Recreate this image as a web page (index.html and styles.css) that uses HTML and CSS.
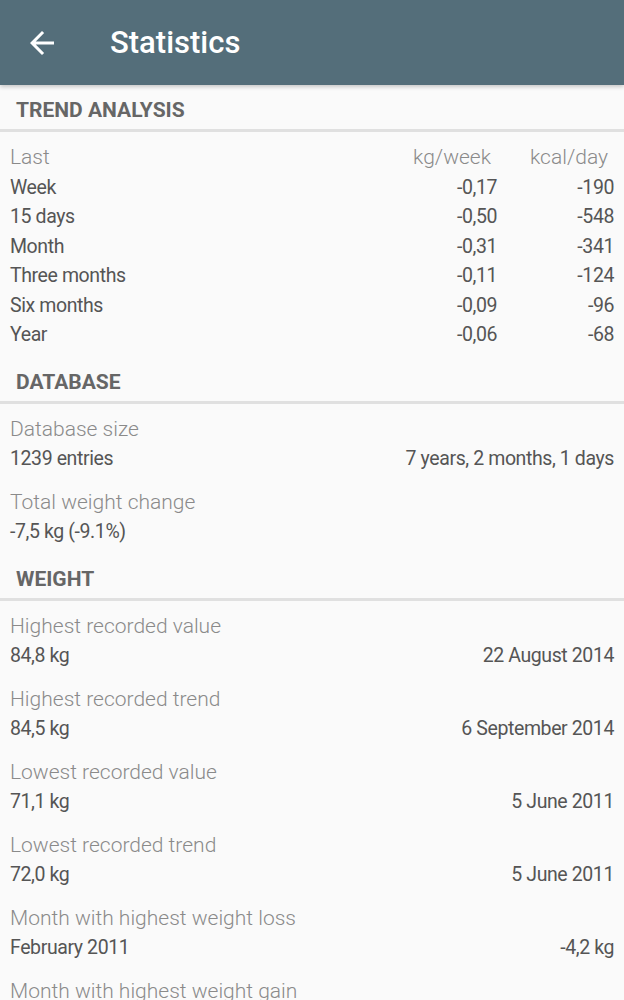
FILE: index.html
```html
<!DOCTYPE html>
<html lang="en">
<head>
  <meta charset="UTF-8">
  <title>Statistics</title>
  <link rel="stylesheet" href="styles.css">
</head>
<body>

<header class="app-bar">
  <svg class="back" width="36" height="36" viewBox="0 0 24 24">
    <path d="M20 11H7.83l5.59-5.59L12 4l-8 8 8 8 1.41-1.41L7.83 13H20v-2z" fill="#fff"/>
  </svg>
  <h1>Statistics</h1>
</header>

<section class="block">
  <h2>TREND ANALYSIS</h2>
  <div class="trend">
    <span class="label">Last</span><span class="label num">kg/week</span><span class="label num">kcal/day</span>
    <span>Week</span><span class="num">-0,17</span><span class="num">-190</span>
    <span>15 days</span><span class="num">-0,50</span><span class="num">-548</span>
    <span>Month</span><span class="num">-0,31</span><span class="num">-341</span>
    <span>Three months</span><span class="num">-0,11</span><span class="num">-124</span>
    <span>Six months</span><span class="num">-0,09</span><span class="num">-96</span>
    <span>Year</span><span class="num">-0,06</span><span class="num">-68</span>
  </div>
</section>

<section class="block">
  <h2>DATABASE</h2>
  <div class="stat">
    <div class="label">Database size</div>
    <div class="value"><span>1239 entries</span><span>7 years, 2 months, 1 days</span></div>
  </div>
  <div class="stat">
    <div class="label">Total weight change</div>
    <div class="value"><span>-7,5 kg (-9.1%)</span></div>
  </div>
</section>

<section class="block">
  <h2>WEIGHT</h2>
  <div class="stat">
    <div class="label">Highest recorded value</div>
    <div class="value"><span>84,8 kg</span><span>22 August 2014</span></div>
  </div>
  <div class="stat">
    <div class="label">Highest recorded trend</div>
    <div class="value"><span>84,5 kg</span><span>6 September 2014</span></div>
  </div>
  <div class="stat">
    <div class="label">Lowest recorded value</div>
    <div class="value"><span>71,1 kg</span><span>5 June 2011</span></div>
  </div>
  <div class="stat">
    <div class="label">Lowest recorded trend</div>
    <div class="value"><span>72,0 kg</span><span>5 June 2011</span></div>
  </div>
  <div class="stat">
    <div class="label">Month with highest weight loss</div>
    <div class="value"><span>February 2011</span><span>-4,2 kg</span></div>
  </div>
  <div class="stat">
    <div class="label">Month with highest weight gain</div>
    <div class="value"><span>July 2014</span><span>+2,1 kg</span></div>
  </div>
</section>

</body>
</html>
```

FILE: styles.css
```css
body {
  margin: 0;
  font-family: Roboto, "Liberation Sans", sans-serif;
  background: #fafafa;
  color: #555;
  overflow: hidden;
}
.app-bar {
  height: 85px;
  background: #546e7a;
  display: flex;
  align-items: center;
  padding-left: 24px;
  box-shadow: 0 2px 4px rgba(0,0,0,0.2);
  position: relative;
}
.app-bar .back {
  margin-right: 50px;
}
.app-bar h1 {
  margin: 0;
  color: #fff;
  font-size: 31px;
  font-weight: 500;
}
.block h2 {
  margin: 0;
  padding: 13px 16px 7px;
  font-size: 21px;
  font-weight: 700;
  color: #666;
  border-bottom: 3px solid #e0e0e0;
}
.trend {
  display: grid;
  grid-template-columns: 1fr 120px 117px;
  padding: 11px 10px 7px;
  font-size: 19.5px;
  letter-spacing: -0.4px;
  line-height: 29.5px;
}
.trend .label {
  letter-spacing: 0;
}
.trend .label.num {
  padding-right: 6px;
}
.num {
  text-align: right;
}
.label {
  font-size: 21px;
  font-weight: 300;
  color: #8a8a8a;
}
.stat {
  padding: 10px 10px 3px;
  line-height: 30px;
}
.stat:last-child {
  padding-bottom: 7px;
}
.stat .value {
  display: flex;
  justify-content: space-between;
  font-size: 19.5px;
  letter-spacing: -0.4px;
}
```
